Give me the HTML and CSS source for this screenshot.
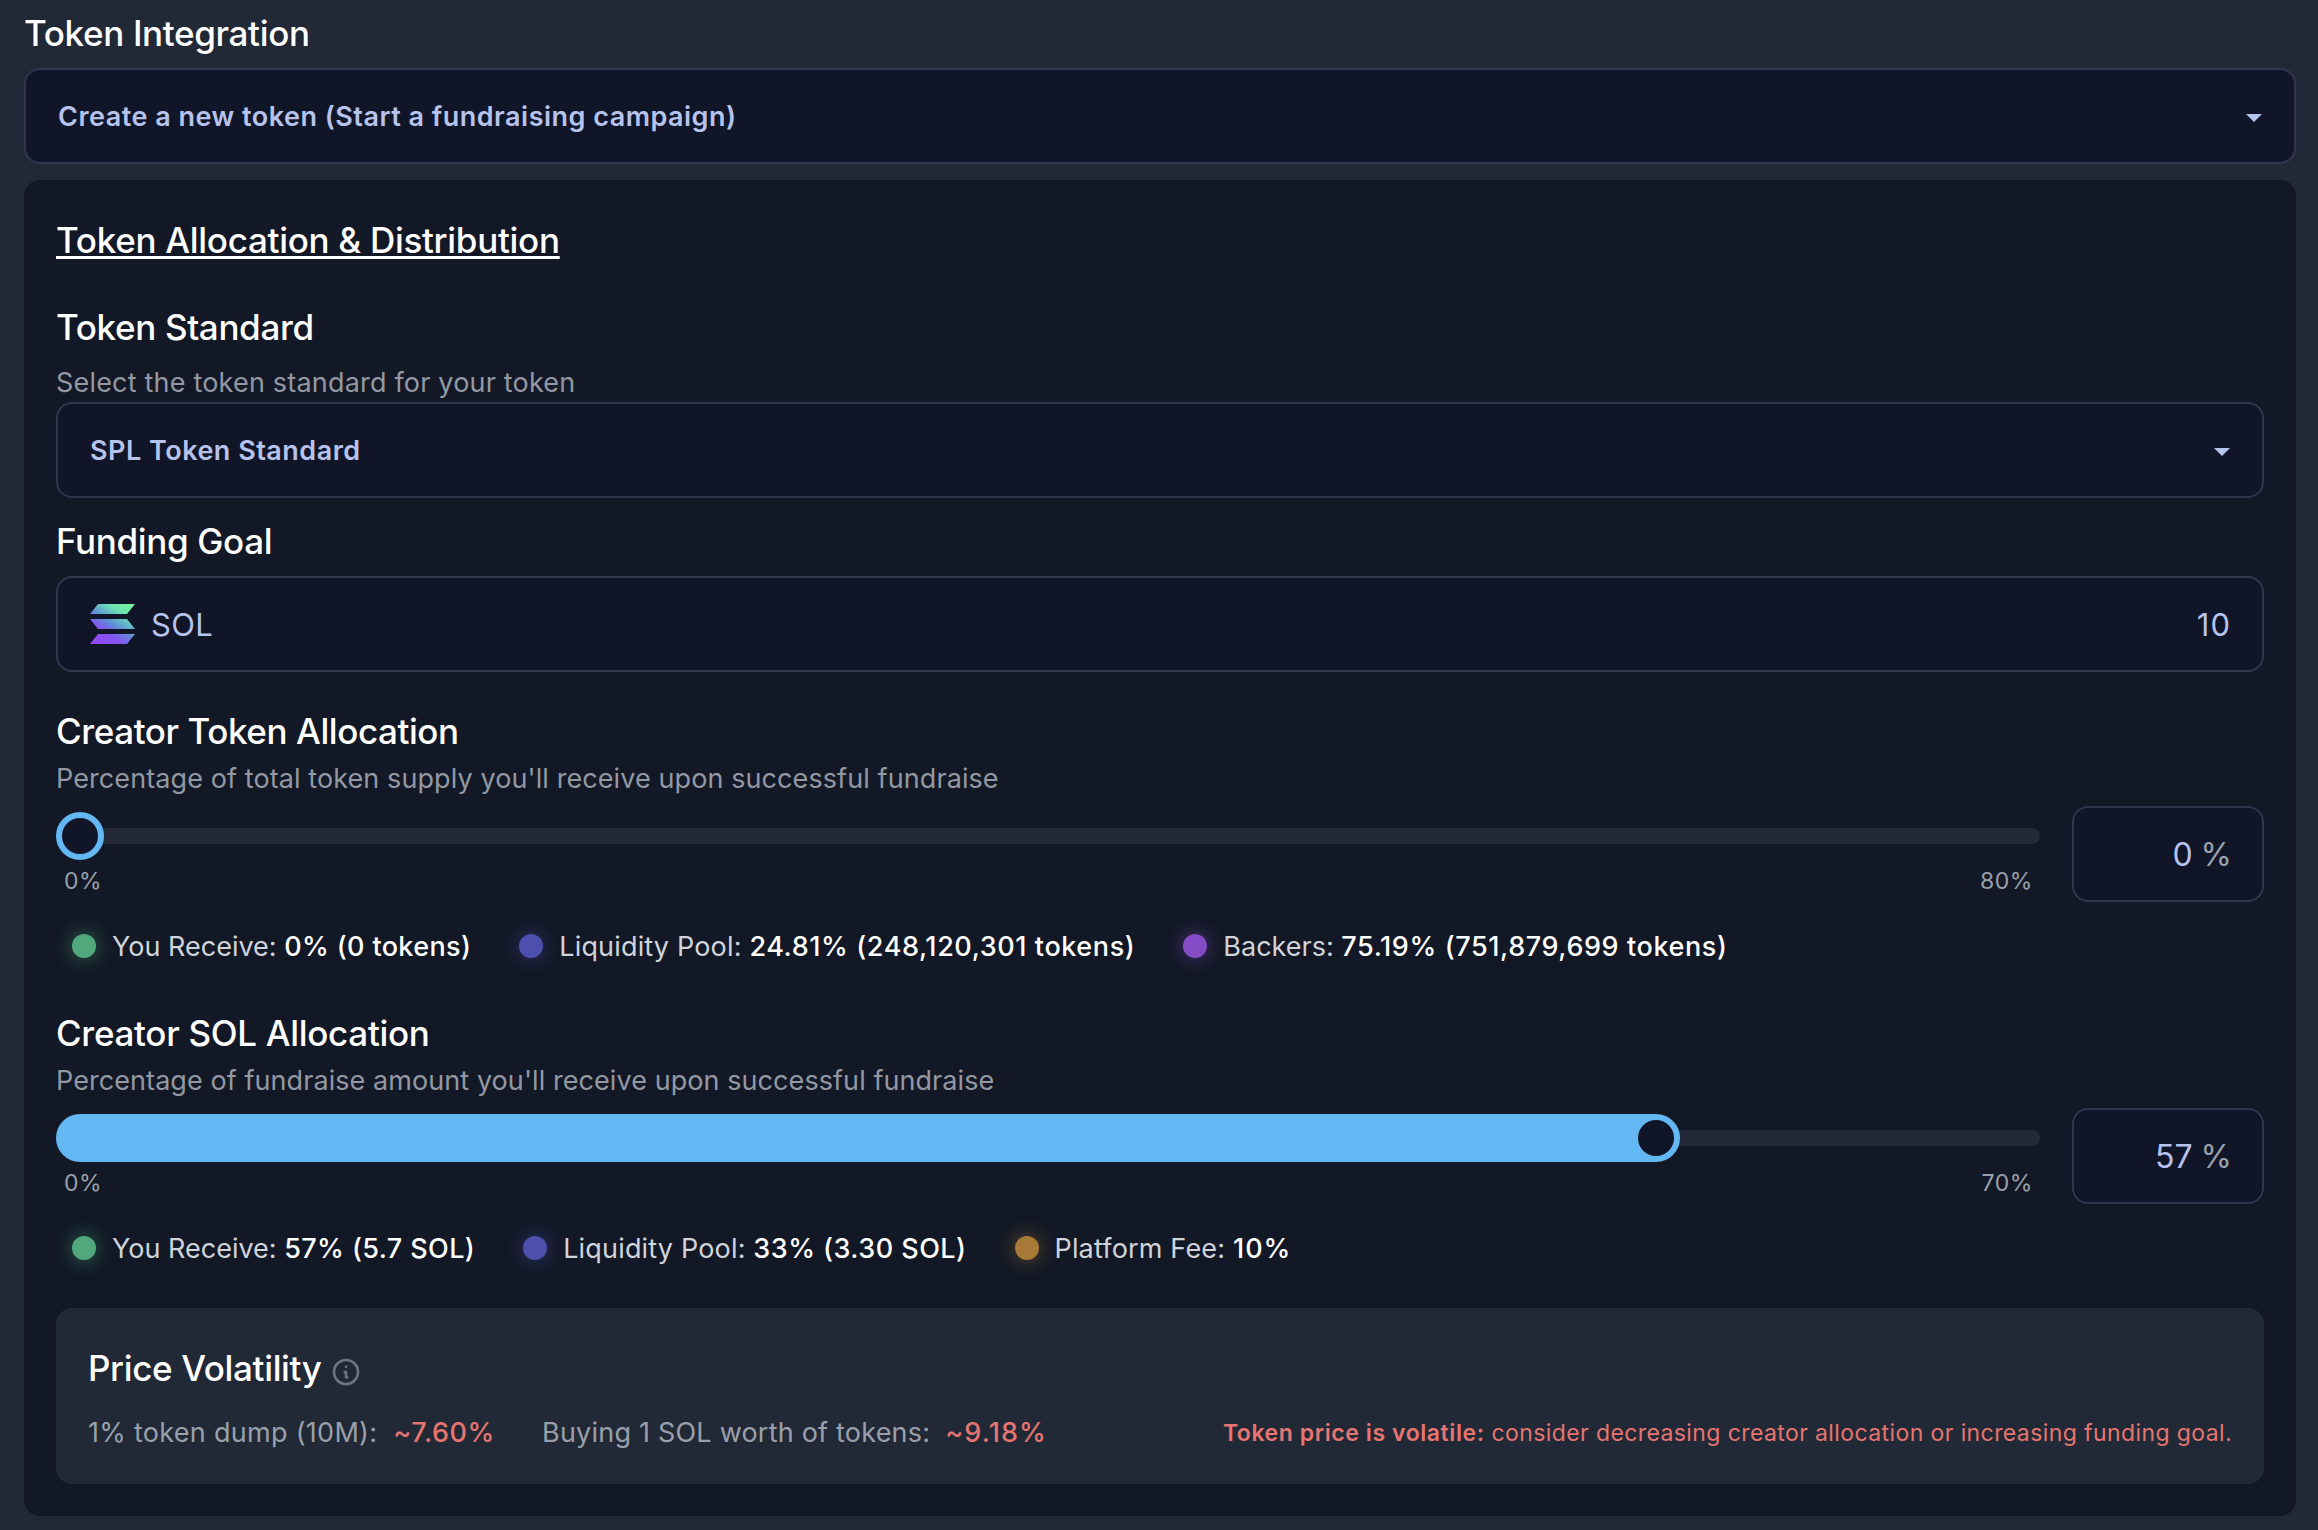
FILE: index.html
```html
<!DOCTYPE html>
<html lang="en">
<head>
<meta charset="utf-8">
<title>Token Integration</title>
<link rel="stylesheet" href="styles.css">
</head>
<body>
<main class="page">
  <h2 class="heading page-heading">Token Integration</h2>
  <div class="field select">
    <span class="select-value">Create a new token (Start a fundraising campaign)</span>
    <svg class="caret" viewBox="0 0 16 8"><path d="M0 0H16L8 8Z"/></svg>
  </div>

  <section class="panel">
    <h2 class="heading"><span class="panel-title">Token Allocation &amp; Distribution</span></h2>

    <h3 class="heading standard-heading">Token Standard</h3>
    <p class="hint standard-hint">Select the token standard for your token</p>
    <div class="field select">
      <span class="select-value">SPL Token Standard</span>
      <svg class="caret" viewBox="0 0 16 8"><path d="M0 0H16L8 8Z"/></svg>
    </div>

    <h3 class="heading goal-heading">Funding Goal</h3>
    <div class="field goal">
      <svg class="sol-logo" viewBox="0 0 45 40">
        <defs>
          <linearGradient id="sol" gradientUnits="userSpaceOnUse" x1="8" y1="44" x2="38" y2="-3">
            <stop offset="0.1" stop-color="#9048f8"/>
            <stop offset="0.32" stop-color="#8258ee"/>
            <stop offset="0.48" stop-color="#6486d8"/>
            <stop offset="0.62" stop-color="#62b6c8"/>
            <stop offset="0.74" stop-color="#6cdcb8"/>
            <stop offset="0.95" stop-color="#74f49c"/>
          </linearGradient>
        </defs>
        <path fill="url(#sol)" d="M8 0H45L37 10H0ZM0 15H37L45 25H8ZM8 30H45L37 40H0Z"/>
      </svg>
      <span class="goal-unit">SOL</span>
      <span class="goal-value">10</span>
    </div>

    <section class="allocation">
      <h3 class="heading alloc-heading token-heading">Creator Token Allocation</h3>
      <p class="hint">Percentage of total token supply you'll receive upon successful fundraise</p>
      <div class="slider-row">
        <div class="slider">
          <div class="track"><div class="progress"><span class="thumb"></span></div></div>
          <div class="range-labels"><span>0%</span><span>80%</span></div>
        </div>
        <div class="field percent"><span class="num">0</span><span class="unit">%</span></div>
      </div>
      <div class="legend token-legend">
        <div class="item"><i class="dot green"></i><span>You Receive: <b class="short">0% (0 tokens)</b></span></div>
        <div class="item"><i class="dot indigo"></i><span><span class="label">Liquidity Pool: </span><b>24.81% (248,120,301 tokens)</b></span></div>
        <div class="item"><i class="dot purple"></i><span>Backers: <b>75.19% (751,879,699 tokens)</b></span></div>
      </div>
    </section>

    <section class="allocation">
      <h3 class="heading alloc-heading">Creator SOL Allocation</h3>
      <p class="hint amount-hint">Percentage of fundraise amount you'll receive upon successful fundraise</p>
      <div class="slider-row">
        <div class="slider">
          <div class="track"><div class="progress"><span class="fill" style="width: 81.43%"></span><span class="thumb"></span></div></div>
          <div class="range-labels"><span>0%</span><span>70%</span></div>
        </div>
        <div class="field percent"><span class="num">57</span><span class="unit">%</span></div>
      </div>
      <div class="legend">
        <div class="item"><i class="dot green"></i><span>You Receive: <b class="short">57% (5.7 SOL)</b></span></div>
        <div class="item"><i class="dot indigo"></i><span><span class="label">Liquidity Pool: </span><b>33% (3.30 SOL)</b></span></div>
        <div class="item"><i class="dot amber"></i><span><span class="label">Platform Fee: </span><b class="fee">10%</b></span></div>
      </div>
    </section>

    <section class="volatility">
      <h3 class="heading vol-heading"><span>Price Volatility</span>
        <svg class="info" viewBox="0 0 24 24" fill="none" stroke="currentColor" stroke-width="1.9" stroke-linecap="round" stroke-linejoin="round">
          <path d="M13 16h-1v-4h-1m1-4h.01M21 12a9 9 0 11-18 0 9 9 0 0118 0z"/>
        </svg>
      </h3>
      <div class="vol-row">
        <span class="metric">1% token dump (10M):</span><span class="metric-value">~7.60%</span>
        <span class="metric second">Buying 1 SOL worth of tokens:</span><span class="metric-value wide">~9.18%</span>
        <span class="warning"><b>Token price is volatile:</b> consider decreasing creator allocation or increasing funding goal.</span>
      </div>
    </section>
  </section>
</main>
</body>
</html>
```
FILE: styles.css
```css
* { box-sizing: border-box; }
body {
  margin: 0;
  background: #212936;
  color: #fff;
  font-family: Inter, "Liberation Sans", sans-serif;
}
.page { padding: 5px 22px 14px 24px; }
h2, h3, p { margin: 0; }
.heading { font-size: 35px; font-weight: 500; line-height: 56px; letter-spacing: -0.35px; white-space: nowrap; }
.page-heading { margin-bottom: 7px; }
.field {
  display: flex;
  align-items: center;
  height: 96px;
  padding: 0 32px;
  border: 2px solid #31364e;
  border-radius: 16px;
  background: #111528;
  color: #b6c3ec;
}
.select { justify-content: space-between; }
.select-value { font-size: 27px; font-weight: 600; letter-spacing: 0.49px; }
.caret { width: 16px; height: 8px; margin-top: 4px; fill: #b6c3ec; }
.panel {
  margin-top: 16px;
  padding: 32px;
  border-radius: 16px;
  background: #121825;
}
.panel-title {
  letter-spacing: -0.29px;
  text-decoration: underline;
  text-decoration-thickness: 3px;
  text-underline-offset: 3px;
  text-decoration-skip-ink: none;
}
.standard-heading { margin: 31px 0 7px; }
.hint { padding-top: 2px; font-size: 27px; line-height: 38px; letter-spacing: 0.09px; color: #9398a3; white-space: nowrap; }
.standard-hint { letter-spacing: 0.19px; }
.amount-hint { letter-spacing: 0.07px; }
.goal-heading { margin: 15px 0 7px; }
.goal { font-size: 31px; }
.sol-logo { width: 45px; height: 40px; }
.goal-unit { margin-left: 16px; letter-spacing: 0.3px; }
.goal-value { margin-left: auto; letter-spacing: 1px; margin-right: -1px; }

.allocation { margin-top: 40px; }
.goal + .allocation { margin-top: 32px; }
.alloc-heading { line-height: 54px; letter-spacing: -0.31px; }
.token-heading { letter-spacing: -0.42px; }
.slider-row { display: flex; gap: 32px; margin-top: 8px; height: 96px; }
.slider { flex: 1; padding-top: 6px; }
.track { display: grid; height: 48px; align-items: center; }
.track::before {
  content: "";
  grid-area: 1 / 1;
  height: 16px;
  border-radius: 8px;
  background: #24293a;
}
.progress { grid-area: 1 / 1; display: flex; padding-right: 48px; }
/* The fill runs on beneath the left half of the thumb. */
.fill {
  box-sizing: content-box;
  flex: none;
  height: 48px;
  padding-right: 24px;
  margin-right: -24px;
  border-radius: 24px 0 0 24px;
  background: #63b8f4;
}
.thumb {
  flex: none;
  width: 48px;
  height: 48px;
  border: 6px solid #63b8f4;
  border-radius: 50%;
  background: #111528;
}
.range-labels {
  display: flex;
  justify-content: space-between;
  padding: 2px 7px 0 8px;
  font-size: 23px;
  line-height: 38px;
  letter-spacing: 0.6px;
  color: #9aa0ab;
}
.percent { width: 192px; justify-content: flex-end; padding-right: 30px; font-size: 32px; gap: 8px; }
.unit { color: #9aa0ab; }

.legend {
  display: flex;
  gap: 48px;
  margin-top: 24px;
  padding-left: 16px;
  font-size: 27px;
  line-height: 40px;
  color: #d1d4da;
  white-space: nowrap;
}
.legend b { color: #fff; font-weight: 500; letter-spacing: 0.47px; }
.token-legend b { letter-spacing: 0.59px; }
.legend .short { letter-spacing: 0.4px; }
.token-legend .short { letter-spacing: 0.36px; }
.legend .fee { letter-spacing: 1px; }
.label { letter-spacing: 0.17px; }
.item { display: flex; align-items: center; gap: 16px; }
.item > span { padding-top: 2px; line-height: 38px; }
.dot { width: 24px; height: 24px; border-radius: 50%; }
.green { background: #50a87c; box-shadow: 0 0 20px rgba(80, 168, 124, 0.6); }
.indigo { background: #4c4fae; box-shadow: 0 0 20px rgba(76, 79, 174, 0.6); }
.purple { background: #844cc4; box-shadow: 0 0 20px rgba(132, 76, 196, 0.6); }
.amber { background: #a87a38; box-shadow: 0 0 20px rgba(168, 122, 56, 0.6); }

.volatility { height: 176px; margin-top: 40px; padding: 32px; border-radius: 16px; background: #212936; }
.vol-heading { display: flex; align-items: center; gap: 8px; }
.info { width: 32px; height: 32px; margin-top: 8px; color: #6f7682; }
.vol-row { display: flex; align-items: center; margin-top: 16px; padding-top: 2px; line-height: 38px; font-size: 27px; white-space: nowrap; }
.metric { color: #9aa0ab; letter-spacing: 0.29px; }
.metric-value { margin-left: 16px; color: #e67571; font-weight: 500; letter-spacing: 0.6px; }
.metric-value.wide { margin-left: 15px; letter-spacing: 1.1px; }
.metric.second { margin-left: 47px; letter-spacing: 0.21px; }
.warning { margin-left: auto; font-size: 23px; letter-spacing: 0.4px; color: #e67571; }
.warning b { font-weight: 600; letter-spacing: 0.58px; }
```
